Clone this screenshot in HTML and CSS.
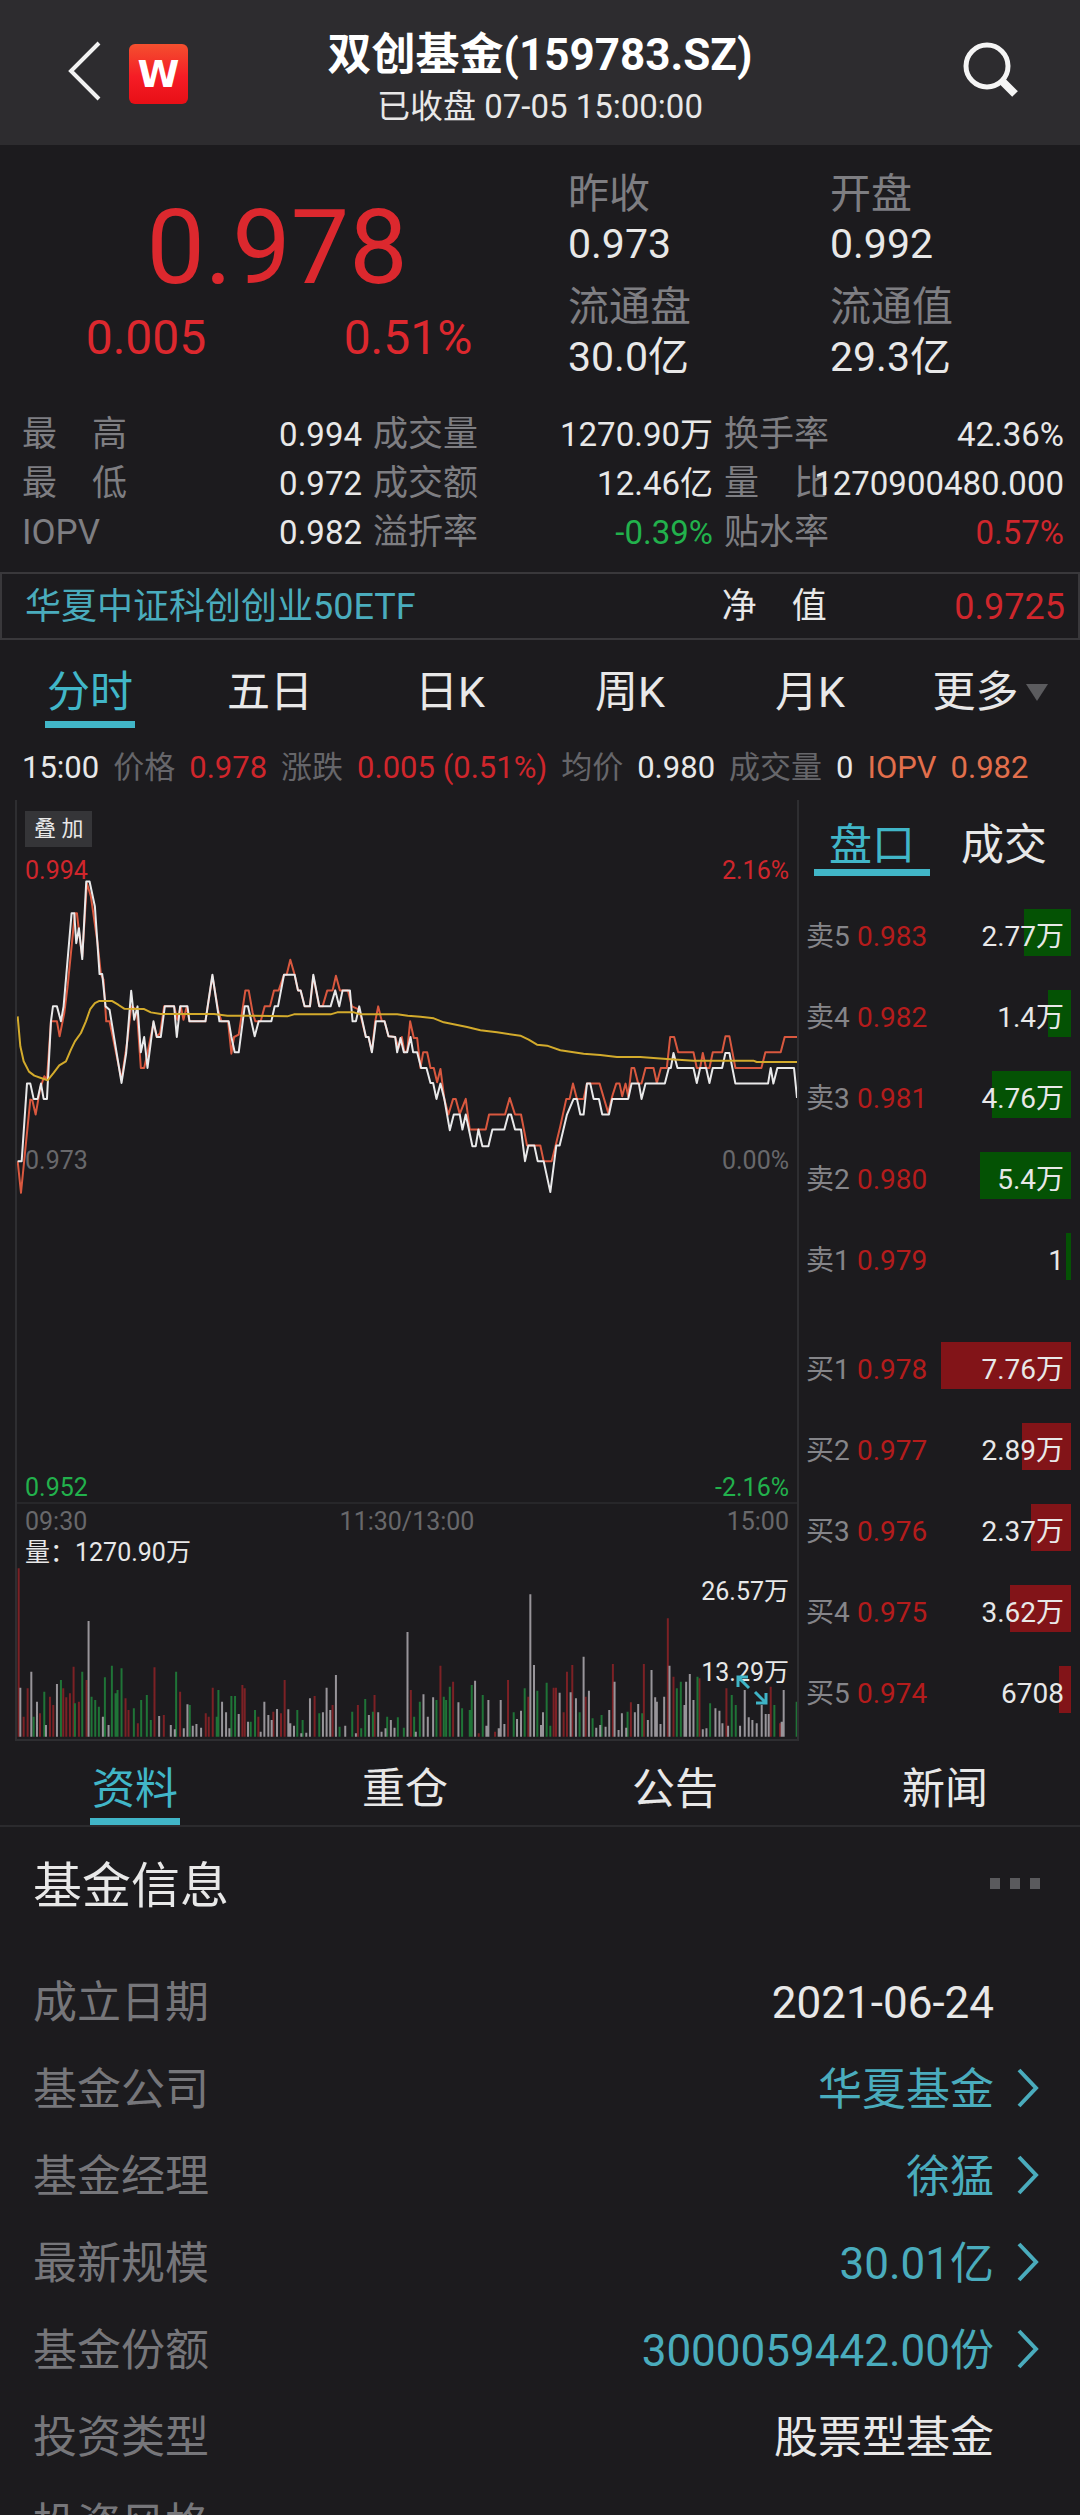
FILE: index.html
```html
<!DOCTYPE html>
<html lang="zh-CN">

<head>
    <meta charset="UTF-8">
    <meta name="viewport" content="width=device-width, initial-scale=1.0">
    <title>双创基金(159783.SZ)</title>
    <link rel="stylesheet" href="styles.css">
</head>

<body>
    <div class="app">
        <!-- 顶部栏 -->
        <header class="topbar">
            <div class="topbar-left">
                <button class="icon-btn" aria-label="返回">
                    <svg width="36" height="64" viewBox="0 0 36 64">
                        <path d="M33 4 5 32l28 28" fill="none" stroke="#f2f2f2" stroke-width="4" />
                    </svg>
                </button>
                <span class="logo">W</span>
            </div>
            <div class="topbar-title">
                <h1>双创基金(159783.SZ)</h1>
                <p>已收盘 07-05 15:00:00</p>
            </div>
            <div class="topbar-right">
                <button class="icon-btn" aria-label="搜索">
                    <svg width="58" height="58" viewBox="0 0 58 58" fill="none" stroke="#f5f5f5">
                        <circle cx="25" cy="25" r="21" stroke-width="5" />
                        <path d="M40 40 53 53" stroke-width="8" />
                    </svg>
                </button>
            </div>
        </header>

        <!-- 行情 -->
        <section class="quote">
            <div class="quote-price">
                <strong>0.978</strong>
                <span>0.005</span>
                <span>0.51%</span>
            </div>
            <dl class="quote-item"><dt>昨收</dt><dd>0.973</dd></dl>
            <dl class="quote-item"><dt>开盘</dt><dd>0.992</dd></dl>
            <dl class="quote-item"><dt>流通盘</dt><dd>30.0亿</dd></dl>
            <dl class="quote-item"><dt>流通值</dt><dd>29.3亿</dd></dl>
        </section>

        <section class="stats">
            <dl><dt>最　高</dt><dd>0.994</dd></dl>
            <dl><dt>成交量</dt><dd>1270.90万</dd></dl>
            <dl><dt>换手率</dt><dd>42.36%</dd></dl>
            <dl><dt>最　低</dt><dd>0.972</dd></dl>
            <dl><dt>成交额</dt><dd>12.46亿</dd></dl>
            <dl><dt>量　比</dt><dd>1270900480.000</dd></dl>
            <dl><dt>IOPV</dt><dd>0.982</dd></dl>
            <dl><dt>溢折率</dt><dd class="down">-0.39%</dd></dl>
            <dl><dt>贴水率</dt><dd class="up">0.57%</dd></dl>
        </section>

        <div class="nav-value">
            <a href="#">华夏中证科创创业50ETF</a>
            <dl><dt>净　值</dt><dd class="up">0.9725</dd></dl>
        </div>

        <!-- 周期切换 -->
        <nav class="tabs">
            <button class="tab active">分时</button>
            <button class="tab">五日</button>
            <button class="tab">日K</button>
            <button class="tab">周K</button>
            <button class="tab">月K</button>
            <button class="tab tab-more">更多</button>
        </nav>

        <div class="tick-info">
            <span>15:00</span>
            <span class="dim">价格</span>
            <span class="up">0.978</span>
            <span class="dim">涨跌</span>
            <span class="up">0.005 (0.51%)</span>
            <span class="dim">均价</span>
            <span>0.980</span>
            <span class="dim">成交量</span>
            <span>0</span>
            <span class="iopv">IOPV</span>
            <span class="iopv">0.982</span>
        </div>

        <div class="market">
            <!-- 分时图 -->
            <div class="chart">
                <div class="price-panel">
                    <svg viewBox="48 60 2343 2109" preserveAspectRatio="none" fill="none" stroke-linejoin="round">
                        <polyline class="line-iopv" points="50,1145 60,1240 88,960 94,962 104,1005 118,925 130,890 138,900 150,725 168,725 176,770 190,700 200,620 214,480 222,400 228,400 236,470 244,530 258,310 270,350 290,490 300,583 308,600 316,725 326,725 362,900 380,780 391,680 408,690 420,865 430,865 440,820 458,730 468,772 478,760 490,680 520,680 530,720 540,680 548,720 558,680 566,725 614,725 635,590 652,690 662,725 682,725 692,822 700,772 714,765 734,632 744,632 756,700 764,725 780,725 792,680 808,680 820,632 834,632 850,585 858,585 869,540 882,585 892,632 900,632 912,680 928,680 938,590 956,680 966,680 980,632 996,632 1006,588 1018,632 1042,632 1054,680 1076,690 1096,772 1104,772 1114,815 1124,725 1133,680 1144,725 1152,725 1164,770 1184,772 1194,805 1204,772 1212,818 1220,815 1229,725 1240,775 1250,775 1260,865 1268,818 1280,818 1290,865 1300,865 1310,908 1320,868 1332,960 1344,1005 1358,958 1366,958 1378,1003 1396,958 1408,1050 1456,1050 1466,1005 1514,1005 1528,955 1544,1005 1562,1005 1580,1098 1620,1098 1630,1145 1654,1145 1666,1098 1680,1040 1698,958 1708,958 1718,912 1730,958 1750,958 1760,912 1798,912 1812,960 1824,1000 1836,950 1848,912 1858,912 1866,950 1876,912 1884,950 1894,865 1902,865 1914,912 1924,912 1936,865 1960,865 1970,910 1982,865 2000,865 2010,772 2022,772 2034,818 2080,818 2090,865 2100,865 2108,820 2118,865 2128,865 2138,818 2166,818 2176,770 2188,770 2206,865 2284,865 2296,818 2342,818 2354,772 2391,772" />
                        <polyline class="line-price" points="50,1145 62,1145 78,912 88,912 98,958 110,958 120,912 128,958 138,958 150,725 156,680 168,680 180,725 188,680 212,400 220,400 226,490 234,445 244,538 256,305 266,305 282,380 296,583 304,583 314,680 326,690 362,910 376,820 391,633 400,720 410,680 420,818 430,772 440,865 458,725 468,772 480,772 492,680 520,680 528,772 538,680 560,680 566,725 614,725 635,585 656,725 684,725 692,772 702,818 714,818 732,680 742,680 762,770 774,725 812,725 822,680 832,680 850,585 882,585 892,632 900,632 912,680 928,680 938,585 956,680 990,680 1004,632 1016,680 1026,632 1048,632 1056,725 1066,725 1076,680 1096,772 1104,772 1114,818 1126,725 1152,725 1164,770 1184,772 1190,818 1200,775 1210,818 1220,818 1230,772 1238,818 1250,818 1262,865 1278,865 1290,910 1298,910 1308,958 1320,912 1332,960 1348,1052 1360,1005 1378,1005 1386,1050 1396,1005 1416,1100 1426,1100 1434,1050 1446,1100 1464,1100 1476,1050 1512,1050 1524,1005 1532,1005 1544,1050 1562,1050 1574,1145 1584,1098 1602,1098 1612,1145 1630,1145 1650,1238 1668,1098 1678,1098 1700,1005 1720,958 1730,958 1740,1005 1750,1005 1760,912 1770,912 1780,958 1796,958 1806,1005 1826,1005 1836,958 1884,958 1894,912 1916,912 1924,958 1936,912 1994,912 2006,865 2012,865 2020,820 2032,865 2080,865 2090,910 2100,865 2118,865 2128,910 2138,865 2166,865 2176,820 2188,820 2206,912 2304,912 2312,865 2320,912 2332,865 2382,865 2391,955" />
                        <polyline class="line-avg" points="50,710 58,800 68,845 84,876 100,888 120,895 140,902 158,880 175,857 195,845 210,810 222,785 240,760 255,725 268,688 282,670 294,664 334,664 352,675 370,687 430,688 450,698 480,703 640,703 680,708 760,708 860,710 880,704 990,704 1010,698 1060,698 1080,704 1190,704 1222,708 1260,711 1300,716 1330,728 1400,742 1440,752 1490,758 1560,768 1585,780 1610,795 1640,798 1680,812 1750,822 1800,826 1850,832 1920,832 2000,838 2080,843 2260,843 2270,847 2391,847" />
                    </svg>
                    <button class="overlay-btn">叠 加</button>
                    <div class="scale scale-top up"><span>0.994</span><span>2.16%</span></div>
                    <div class="scale scale-mid"><span>0.973</span><span>0.00%</span></div>
                    <div class="scale scale-bottom down"><span>0.952</span><span>-2.16%</span></div>
                </div>
                <div class="time-axis">
                    <span>09:30</span><span>11:30/13:00</span><span>15:00</span>
                </div>
                <!-- 成交量 -->
                <div class="volume-panel">
                    <svg viewBox="48 237 2343 600" preserveAspectRatio="none" fill="none">
                        <path class="vol-up" d="M53 830V325M68 830V770M80 830V685M117 830V760M147 830V710M157 830V735M187 830V685M196 830V712M207 830V700M218 830V620M234 830V725M257 830V660M374 830V715M383 830V750M411 830V790M461 830V622M489 830V765M538 830V695M615 830V760M624 830V770M636 830V683M725 830V675M732 830V685M773 830V770M818 830V755M841 830V760M852 830V660M942 830V708M996 830V735M1072 830V735M1122 830V705M1231 830V690M1320 830V617M1358 830V665M1435 830V820M1484 830V815M1523 830V660M1584 830V710M1660 830V683M1667 830V683M1690 830V757M1700 830V635M1716 830V615M1756 830V710M1838 830V612M1892 830V727M1931 830V612M2003 830V475M2020 830V650M2098 830V655M2179 830V685M2312 830V680M2340 830V790" />
                        <path class="vol-down" d="M98 830V770M130 830V695M180 830V660M222 830V730M244 830V635M272 830V710M283 830V720M294 830V740M312 830V652M333 830V617M344 830V700M350 830V690M362 830V625M399 830V745M421 830V720M438 830V705M450 830V780M526 830V635M567 830V735M648 830V770M653 830V690M692 830V708M703 830V708M750 830V785M763 830V750M890 830V750M906 830V780M956 830V760M1017 830V800M1055 830V755M1082 830V805M1094 830V717M1117 830V755M1160 830V770M1192 830V772M1210 830V803M1241 830V770M1258 830V725M1308 830V720M1330 830V710M1337 830V720M1348 830V680M1385 830V745M1408 830V750M1414 830V675M1447 830V705M1540 830V757M1573 830V685M1611 830V692M1639 830V668M1650 830V797M1738 830V757M1777 830V775M1804 830V765M1882 830V755M1926 830V760M2030 830V685M2042 830V665M2092 830V650M2130 830V730M2195 830V705M2207 830V735M2323 830V735M2390 830V725" />
                        <path class="vol-flat" d="M58 830V683M91 830V635M108 830V725M135 830V795M168 830V672M263 830V483M306 830V770M323 830V795M475 830V768M510 830V795M522 830V808M549 830V805M560 830V733M576 830V797M587 830V792M601 830V803M664 830V725M676 830V757M686 830V805M714 830V762M742 830V785M780 830V815M791 830V725M803 830V765M813 830V780M829 830V747M863 830V748M869 830V790M880 830V797M902 830V820M917 830V818M928 830V715M967 830V757M978 830V683M989 830V750M1006 830V645M1034 830V797M1066 830V820M1105 830V765M1133 830V757M1143 830V815M1155 830V805M1171 830V780M1182 830V803M1221 830V516M1246 830V815M1269 830V703M1282 830V770M1298 830V712M1374 830V727M1424 830V662M1458 830V797M1464 830V720M1495 830V805M1501 830V720M1512 830V792M1550 830V777M1562 830V752M1590 830V403M1601 830V615M1622 830V795M1628 830V757M1678 830V698M1711 830V697M1727 830V715M1750 830V590M1766 830V692M1788 830V803M1800 830V795M1816 830V800M1827 830V750M1843 830V665M1855 830V810M1865 830V760M1878 830V803M1904 830V757M1914 830V732M1943 830V780M1954 830V630M1965 830V712M1970 830V725M1981 830V792M1992 830V710M2008 830V617M2053 830V735M2058 830V665M2069 830V642M2080 830V720M2108 830V808M2119 830V805M2146 830V745M2158 830V752M2167 830V790M2184 830V797M2220 830V797M2234 830V690M2246 830V772M2257 830V780M2270 830V790M2285 830V735M2297 830V762M2306 830V762M2345 830V785M2351 830V690" />
                    </svg>
                    <span class="vol-total">量：1270.90万</span>
                    <span class="vol-max">26.57万</span>
                    <span class="vol-half">13.29万</span>
                    <button class="expand-btn" aria-label="全屏">
                        <svg width="32" height="32" viewBox="0 0 32 32" fill="none" stroke="#3fb4c6" stroke-width="3">
                            <path d="M2 13V3h10M2 3l11 11" />
                            <path d="M30 19v10H20M30 29 19 18" />
                        </svg>
                    </button>
                </div>
            </div>

            <!-- 五档盘口 -->
            <div class="book">
                <div class="book-tabs">
                    <button class="book-tab active">盘口</button>
                    <button class="book-tab">成交</button>
                </div>
                <table class="levels sell">
                    <tr><th scope="row">卖5</th><td class="price">0.983</td><td class="vol"><i style="width:36%"></i><span>2.77万</span></td></tr>
                    <tr><th scope="row">卖4</th><td class="price">0.982</td><td class="vol"><i style="width:18%"></i><span>1.4万</span></td></tr>
                    <tr><th scope="row">卖3</th><td class="price">0.981</td><td class="vol"><i style="width:61%"></i><span>4.76万</span></td></tr>
                    <tr><th scope="row">卖2</th><td class="price">0.980</td><td class="vol"><i style="width:70%"></i><span>5.4万</span></td></tr>
                    <tr><th scope="row">卖1</th><td class="price">0.979</td><td class="vol"><i style="width:4%"></i><span>1</span></td></tr>
                </table>
                <table class="levels buy">
                    <tr><th scope="row">买1</th><td class="price">0.978</td><td class="vol"><i style="width:100%"></i><span>7.76万</span></td></tr>
                    <tr><th scope="row">买2</th><td class="price">0.977</td><td class="vol"><i style="width:38%"></i><span>2.89万</span></td></tr>
                    <tr><th scope="row">买3</th><td class="price">0.976</td><td class="vol"><i style="width:31%"></i><span>2.37万</span></td></tr>
                    <tr><th scope="row">买4</th><td class="price">0.975</td><td class="vol"><i style="width:47%"></i><span>3.62万</span></td></tr>
                    <tr><th scope="row">买5</th><td class="price">0.974</td><td class="vol"><i style="width:9%"></i><span>6708</span></td></tr>
                </table>
            </div>
        </div>

        <nav class="tabs info-tabs">
            <button class="tab active">资料</button>
            <button class="tab">重仓</button>
            <button class="tab">公告</button>
            <button class="tab">新闻</button>
        </nav>

        <!-- 基金信息 -->
        <section class="fund">
            <div class="fund-head">
                <h2>基金信息</h2>
                <button class="dots" aria-label="更多信息"><i></i><i></i><i></i></button>
            </div>
            <dl class="fund-row"><dt>成立日期</dt><dd>2021-06-24</dd></dl>
            <dl class="fund-row"><dt>基金公司</dt><dd><a href="#">华夏基金</a></dd></dl>
            <dl class="fund-row"><dt>基金经理</dt><dd><a href="#">徐猛</a></dd></dl>
            <dl class="fund-row"><dt>最新规模</dt><dd><a href="#">30.01亿</a></dd></dl>
            <dl class="fund-row"><dt>基金份额</dt><dd><a href="#">3000059442.00份</a></dd></dl>
            <dl class="fund-row"><dt>投资类型</dt><dd>股票型基金</dd></dl>
            <dl class="fund-row"><dt>投资风格</dt></dl>
        </section>
    </div>

    <script>
        // 可跳转的行在右侧加箭头
        document.querySelectorAll('.fund-row a').forEach(function (link) {
            link.insertAdjacentHTML('beforeend',
                '<svg class="arrow" width="24" height="40" viewBox="0 0 24 40">' +
                '<path d="M3 2 20 20 3 38" fill="none" stroke="currentColor" stroke-width="4"/></svg>');
        });
    </script>
</body>

</html>
```
FILE: styles.css
```css
* {
    box-sizing: border-box;
}

body {
    margin: 0;
    background: #1c1b1e;
    color: #e8e8e8;
    font-family: Roboto, "Noto Sans CJK SC", sans-serif;
}

h1,
h2,
p,
dl,
dd {
    margin: 0;
}

button {
    padding: 0;
    border: 0;
    background: none;
    color: inherit;
    font: inherit;
    cursor: pointer;
}

a {
    color: #4aacbd;
    text-decoration: none;
}

svg {
    display: block;
}

.up {
    color: #cf262c;
}

.down {
    color: #22b14c;
}

.dim {
    color: #66666a;
}

.app {
    height: 100vh;
    overflow-y: auto;
    scrollbar-width: none;
}

/* 顶部栏 */
.topbar {
    display: grid;
    grid-template-columns: 1fr auto 1fr;
    height: 145px;
    padding: 30px 60px 0;
    background: #2d2c2f;
}

.topbar-left {
    display: flex;
    align-items: flex-start;
    gap: 27px;
    padding: 9px 0 0 6px;
}

.logo {
    width: 59px;
    height: 60px;
    margin-top: 5px;
    border-radius: 6px;
    background: linear-gradient(#f4502f, #f51c25 55%, #e80f16);
    color: #fff;
    font: bold 38px/60px "DejaVu Sans", sans-serif;
    text-align: center;
}

.topbar-title {
    text-align: center;
}

.topbar-title h1 {
    color: #fff;
    font-size: 44px;
    line-height: 50px;
}

.topbar-title p {
    padding-top: 5px;
    font-size: 33px;
    line-height: 44px;
}

.topbar-right {
    display: flex;
    align-items: flex-start;
    justify-content: flex-end;
    padding-top: 11px;
}

/* 行情 */
.quote {
    display: grid;
    grid-template-columns: repeat(4, 1fr);
    row-gap: 13px;
    padding: 24px 17px 0 15px;
}

.quote-price {
    display: grid;
    grid-column: 1 / 3;
    grid-row: 1 / 3;
    grid-template-columns: 1fr 1fr;
    align-content: start;
    padding-top: 14px;
    color: #dc282e;
    font-size: 48px;
    line-height: 50px;
    text-align: center;
}

.quote-price strong {
    grid-column: 1 / 3;
    font-size: 104px;
    font-weight: 400;
    line-height: 130px;
}

.quote-item {
    padding-left: 29px;
    font-size: 41px;
    line-height: 50px;
}

.quote-item dt,
.stats dt {
    color: #7e7e82;
}

.stats {
    display: grid;
    grid-template-columns: repeat(3, 1fr);
    column-gap: 11px;
    padding: 28px 16px 15px 22px;
    line-height: 49px;
}

.stats dl,
.nav-value,
.nav-value dl {
    display: flex;
    justify-content: space-between;
    min-width: 0;
}

.stats dt {
    width: 86px;
    font-size: 35px;
    white-space: nowrap;
}

.stats dd {
    font-size: 33px;
}

.nav-value {
    padding: 2px 13px 0 23px;
    border: 2px solid #39383b;
    font-size: 36px;
    line-height: 62px;
}

.nav-value dl {
    width: 33%;
}

.nav-value dt {
    font-size: 35px;
}

/* 标签栏 */
.tabs {
    display: flex;
    padding-top: 22px;
}

.tab {
    display: flex;
    flex: 1;
    align-items: center;
    justify-content: center;
    position: relative;
    height: 66px;
    padding-bottom: 6px;
    font-size: 43px;
    line-height: 60px;
}

.tab.active,
.book-tab.active {
    color: #41b6c8;
}

.tab.active::after {
    content: "";
    position: absolute;
    bottom: 0;
    width: 90px;
    height: 7px;
    background: #41b6c8;
}

.tab-more::after {
    content: "";
    margin-left: 7px;
    border: 11px solid transparent;
    border-top: 17px solid #5b5b5e;
    border-bottom: 0;
}

.tick-info {
    display: flex;
    gap: 14px;
    padding: 20px 22px 12px;
    font-size: 31px;
    line-height: 40px;
    white-space: nowrap;
}

.iopv {
    color: #e26f4c;
}

/* 分时图 + 盘口 */
.market {
    display: flex;
    padding: 0 9px 0 15px;
}

.chart {
    flex: 1;
    border: solid #2e2e31;
    border-width: 0 2px 2px;
    font-size: 25px;
    line-height: 26px;
}

.price-panel {
    position: relative;
    height: 704px;
    border-bottom: 2px solid #27272a;
}

.price-panel>svg,
.volume-panel>svg {
    width: 100%;
    height: 100%;
}

.line-price,
.line-iopv,
.line-avg {
    stroke-width: 6;
}

.line-price {
    stroke: #e9e9ea;
}

.line-iopv {
    stroke: #d9583f;
}

.line-avg {
    stroke: #d3ab2c;
}

.overlay-btn {
    position: absolute;
    top: 11px;
    left: 8px;
    padding: 0 9px;
    background: #353538;
    font-size: 22px;
    line-height: 36px;
}

.scale {
    display: flex;
    justify-content: space-between;
    position: absolute;
    right: 8px;
    left: 8px;
}

.scale-top {
    top: 58px;
}

.scale-mid {
    top: 348px;
    color: #68686b;
}

.scale-bottom {
    bottom: 1px;
}

.time-axis {
    display: flex;
    justify-content: space-between;
    padding: 5px 8px 4px;
    color: #68686b;
}

.volume-panel {
    position: relative;
    height: 200px;
}

.vol-up,
.vol-down,
.vol-flat {
    stroke-width: 6;
}

.vol-up {
    stroke: #7c2125;
}

.vol-down {
    stroke: #1f7437;
}

.vol-flat {
    stroke: #98959a;
}

.vol-total {
    position: absolute;
    top: 1px;
    left: 8px;
}

.vol-max,
.vol-half {
    position: absolute;
    right: 8px;
}

.vol-max {
    top: 40px;
}

.vol-half {
    top: 121px;
}

.expand-btn {
    position: absolute;
    right: 29px;
    bottom: 33px;
}

.book {
    width: 272px;
    padding-left: 7px;
}

.book-tabs {
    display: flex;
    gap: 16px;
    padding: 21px 0 20px 8px;
}

.book-tab {
    width: 116px;
    border-bottom: 7px solid transparent;
    font-size: 43px;
    line-height: 48px;
}

.book-tab.active {
    border-color: #41b6c8;
}

.levels {
    width: 100%;
    border-collapse: collapse;
    font-size: 28px;
    line-height: 28px;
}

.levels+.levels {
    margin-top: 28px;
}

.levels tr {
    height: 81px;
}

.levels th,
.levels td {
    padding: 0;
    font-weight: 400;
    text-align: left;
}

.levels th {
    width: 51px;
    color: #858589;
    white-space: nowrap;
}

.levels .price {
    color: #b41c1c;
}

.levels .vol {
    position: relative;
    width: 130px;
    padding-right: 7px;
    text-align: right;
}

.vol i {
    position: absolute;
    top: 13px;
    right: 0;
    height: 47px;
}

.vol span {
    position: relative;
}

.sell i {
    background: #045204;
}

.buy i {
    background: #821418;
}

/* 基金信息 */
.info-tabs {
    padding-top: 18px;
    border-bottom: 2px solid #2b2b2e;
}

.fund {
    padding: 30px 40px 0 33px;
}

.fund-head {
    display: flex;
    align-items: center;
    justify-content: space-between;
    margin-bottom: 43px;
}

.fund-head h2 {
    font-size: 49px;
    font-weight: 400;
    line-height: 60px;
}

.dots {
    display: flex;
    gap: 10px;
    margin-bottom: 8px;
}

.dots i {
    width: 10px;
    height: 11px;
    background: #5a5a5d;
}

.fund-row {
    display: flex;
    justify-content: space-between;
    font-size: 44px;
    line-height: 87px;
}

.fund-row dt {
    color: #76767a;
}

.fund-row dd {
    padding-right: 46px;
}

.fund-row a {
    display: flex;
    align-items: center;
    gap: 22px;
    margin-right: -46px;
}

.arrow {
    margin-bottom: 6px;
}
```
